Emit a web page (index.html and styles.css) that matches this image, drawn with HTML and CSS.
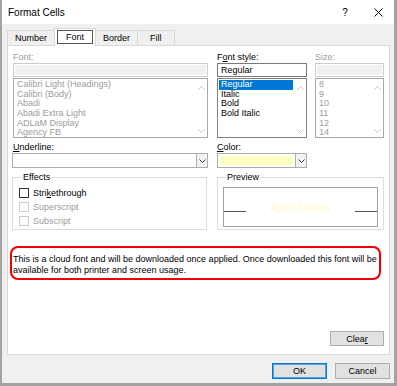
FILE: index.html
```html
<!DOCTYPE html>
<html lang="en">
<head>
  <meta charset="UTF-8">
  <title>Format Cells</title>
  <link rel="stylesheet" href="styles.css">
</head>
<body>

  <div class="window">
    <div class="titlebar">
      <span class="title">Format Cells</span>
      <span class="help">?</span>
      <span class="close">
        <svg width="9" height="9" viewBox="0 0 9 9"><path d="M0.5 0.5 L8.5 8.5 M8.5 0.5 L0.5 8.5" stroke="#000" stroke-width="1"/></svg>
      </span>
    </div>

    <div class="content">
      <div class="tabs">
        <div class="tab">Number</div>
        <div class="tab active"><span class="focus">Font</span></div>
        <div class="tab">Border</div>
        <div class="tab">Fill</div>
      </div>

      <div class="panel">
        <div class="fields">
          <!-- labels -->
          <div class="label disabled">Font:</div>
          <div class="label">F<u>o</u>nt style:</div>
          <div class="label disabled">Size:</div>

          <!-- text boxes -->
          <div class="input disabled"></div>
          <div class="input">Regular</div>
          <div class="input disabled"></div>

          <!-- lists -->
          <div class="list disabled">
            <ul>
              <li>Calibri Light (Headings)</li>
              <li>Calibri (Body)</li>
              <li>Abadi</li>
              <li>Abadi Extra Light</li>
              <li>ADLaM Display</li>
              <li>Agency FB</li>
            </ul>
            <div class="scroll">
              <svg width="7" height="4" viewBox="0 0 7 4"><path d="M0.5 3.5 L3.5 0.5 L6.5 3.5" fill="none" stroke="#c4c4c4"/></svg>
              <svg width="7" height="4" viewBox="0 0 7 4"><path d="M0.5 0.5 L3.5 3.5 L6.5 0.5" fill="none" stroke="#c4c4c4"/></svg>
            </div>
          </div>
          <div class="list">
            <ul>
              <li class="selected">Regular</li>
              <li>Italic</li>
              <li>Bold</li>
              <li>Bold Italic</li>
            </ul>
            <div class="scroll">
              <svg width="7" height="4" viewBox="0 0 7 4"><path d="M0.5 3.5 L3.5 0.5 L6.5 3.5" fill="none" stroke="#c4c4c4"/></svg>
              <svg width="7" height="4" viewBox="0 0 7 4"><path d="M0.5 0.5 L3.5 3.5 L6.5 0.5" fill="none" stroke="#c4c4c4"/></svg>
            </div>
          </div>
          <div class="list disabled">
            <ul>
              <li>8</li>
              <li>9</li>
              <li>10</li>
              <li>11</li>
              <li>12</li>
              <li>14</li>
            </ul>
            <div class="scroll">
              <svg width="7" height="4" viewBox="0 0 7 4"><path d="M0.5 3.5 L3.5 0.5 L6.5 3.5" fill="none" stroke="#c4c4c4"/></svg>
              <svg width="7" height="4" viewBox="0 0 7 4"><path d="M0.5 0.5 L3.5 3.5 L6.5 0.5" fill="none" stroke="#c4c4c4"/></svg>
            </div>
          </div>

          <!-- underline / color -->
          <div class="label row-gap"><u>U</u>nderline:</div>
          <div class="label row-gap span2"><u>C</u>olor:</div>

          <div class="combo">
            <div class="combo-value"></div>
            <div class="combo-btn">
              <svg width="7" height="4" viewBox="0 0 7 4"><path d="M0.5 0.5 L3.5 3.5 L6.5 0.5" fill="none" stroke="#333"/></svg>
            </div>
          </div>
          <div class="combo">
            <div class="combo-value"><span class="swatch"></span></div>
            <div class="combo-btn">
              <svg width="7" height="4" viewBox="0 0 7 4"><path d="M0.5 0.5 L3.5 3.5 L6.5 0.5" fill="none" stroke="#333"/></svg>
            </div>
          </div>
          <div></div>

          <!-- groups -->
          <fieldset class="group effects">
            <legend>Effects</legend>
            <label class="check"><span class="box"></span><span>Stri<u>k</u>ethrough</span></label>
            <label class="check disabled"><span class="box"></span><span>Superscript</span></label>
            <label class="check disabled"><span class="box"></span><span>Subscript</span></label>
          </fieldset>
          <fieldset class="group preview span2">
            <legend>Preview</legend>
            <div class="preview-box">
              <span class="rule"></span>
              <span class="sample">Aptos Narrow</span>
              <span class="rule"></span>
            </div>
          </fieldset>
        </div>

        <div class="note">
          This is a cloud font and will be downloaded once applied. Once downloaded this font will be
          available for both printer and screen usage.
        </div>

        <div class="clear-row">
          <button class="btn">Clea<u>r</u></button>
        </div>
      </div>

      <div class="actions">
        <button class="btn default">OK</button>
        <button class="btn">Cancel</button>
      </div>
    </div>
  </div>

</body>
</html>
```

FILE: styles.css
```css
* {
  box-sizing: border-box;
  margin: 0;
  padding: 0;
}

body {
  font-family: "Liberation Sans", Arial, sans-serif;
  font-size: 9px;
  color: #000;
  background: #fff;
}

.window {
  width: 397px;
  height: 386px;
  display: flex;
  flex-direction: column;
  background: #f0f0f0;
  border-left: 2px solid #a3a3a3;
  border-right: 3px solid #a3a3a3;
  border-bottom: 3px solid #a3a3a3;
}

/* title bar */
.titlebar {
  height: 24px;
  background: #fff;
  display: flex;
  align-items: center;
  padding-left: 6px;
}

.title {
  flex: 1;
  font-size: 10px;
}

.help {
  width: 16px;
  margin-right: 17px;
  text-align: center;
  font-size: 10px;
}

.close {
  width: 16px;
  margin-right: 8px;
  display: flex;
  justify-content: center;
}

/* tabs */
.content {
  flex: 1;
  display: flex;
  flex-direction: column;
  padding: 4px 4px 0 5px;
}

.tabs {
  display: flex;
  align-items: flex-end;
  height: 17px;
  position: relative;
  z-index: 1;
}

.tab {
  height: 15px;
  line-height: 14px;
  padding: 0 7px;
  border: 1px solid #d9d9d9;
  border-bottom: none;
  border-right: none;
  background: #f0f0f0;
}

.tab:last-child {
  border-right: 1px solid #d9d9d9;
  padding: 0 12px;
}

.tab.active {
  height: 18px;
  margin-bottom: -1px;
  padding: 1px 2px 2px;
  background: #fff;
  border-right: 1px solid #d9d9d9;
}

.tab.active + .tab {
  border-left: none;
}

.focus {
  display: block;
  height: 14px;
  line-height: 12px;
  padding: 0 8px;
  border: 1px solid #555;
}

/* panel */
.panel {
  height: 310px;
  background: #fff;
  border: 1px solid #d9d9d9;
  padding: 5px 5px 0 5px;
}

.fields {
  display: grid;
  grid-template-columns: 195px 90px 68px;
  column-gap: 9px;
}

.fields > :nth-child(3n) {
  margin-left: -1px;
}

.label {
  height: 12px;
  line-height: 12px;
}

.label.row-gap {
  margin-top: 3px;
}

.disabled {
  color: #9c9c9c;
}

.span2 {
  grid-column: span 2;
}

.input {
  height: 14px;
  line-height: 12px;
  padding-left: 3px;
  border: 1px solid #7a7a7a;
  background: #fff;
}

.input.disabled {
  border-color: #cccccc;
  background: #f0f0f0;
  box-shadow: inset 0 0 0 1px #fff;
}

.list {
  height: 60px;
  margin-top: 1px;
  display: flex;
  border: 1px solid #828282;
  background: #fff;
}

.list.disabled {
  border-color: #a8a8a8;
}

.list ul {
  flex: 1;
  list-style: none;
  padding: 1px 1px 0;
}

.list li {
  height: 9.7px;
  line-height: 9.7px;
  padding-left: 2px;
  white-space: nowrap;
}

.list li.selected {
  background: #0078d7;
  color: #fff;
}

.scroll {
  width: 12px;
  display: flex;
  flex-direction: column;
  justify-content: space-between;
  align-items: center;
  padding: 7px 0 4px;
}

/* combos */
.combo {
  height: 15px;
  display: flex;
  border: 1px solid #adadad;
  background: #fff;
}

.combo-value {
  flex: 1;
  padding: 2px;
}

.swatch {
  display: block;
  width: 73px;
  height: 9px;
  background: #ffffc2;
}

.combo-btn {
  width: 11px;
  display: flex;
  align-items: center;
  justify-content: center;
  border-left: 1px solid #adadad;
  background: #f2f2f2;
}

/* group boxes */
.group {
  height: 59px;
  margin-top: 3px;
  border: 1px solid #dcdcdc;
  padding: 0 5px;
}

.group legend {
  margin-left: 3px;
  padding: 0 1px;
  line-height: 12px;
}

.effects {
  width: 195px;
  padding-left: 6px;
  padding-top: 3px;
}

.preview {
  width: 167px;
  margin-left: 0;
}

.check {
  display: flex;
  align-items: center;
  height: 14px;
  gap: 4px;
}

.check .box {
  width: 10px;
  height: 10px;
  border: 1px solid #333;
  background: #fff;
}

.check.disabled .box {
  border-color: #cccccc;
}

.preview-box {
  height: 40px;
  margin-top: 4px;
  display: flex;
  align-items: center;
  justify-content: space-between;
  border: 1px solid #a0a0a0;
}

.rule {
  width: 22px;
  height: 1px;
  margin-top: 8px;
  background: #555;
}

.sample {
  font-size: 10px;
  color: #fffac8;
}

/* note */
.note {
  width: 371px;
  margin: 16px 0 0 -3px;
  padding: 6px 2px 2px 1px;
  border: 2px solid #ee0000;
  border-radius: 8px;
  line-height: 11px;
}

.clear-row {
  display: flex;
  justify-content: flex-end;
  margin-top: 51px;
}

.btn {
  width: 54px;
  height: 15px;
  font-family: inherit;
  font-size: 9px;
  color: #000;
  background: #e1e1e1;
  border: 1px solid #adadad;
}

/* bottom buttons */
.actions {
  display: flex;
  justify-content: flex-end;
  gap: 8px;
  margin-top: 8px;
}

.actions .btn {
  width: 55px;
  height: 16px;
}

.btn.default {
  border-color: #0078d7;
  box-shadow: inset 0 0 0 1px #5aa3e0;
}
```
